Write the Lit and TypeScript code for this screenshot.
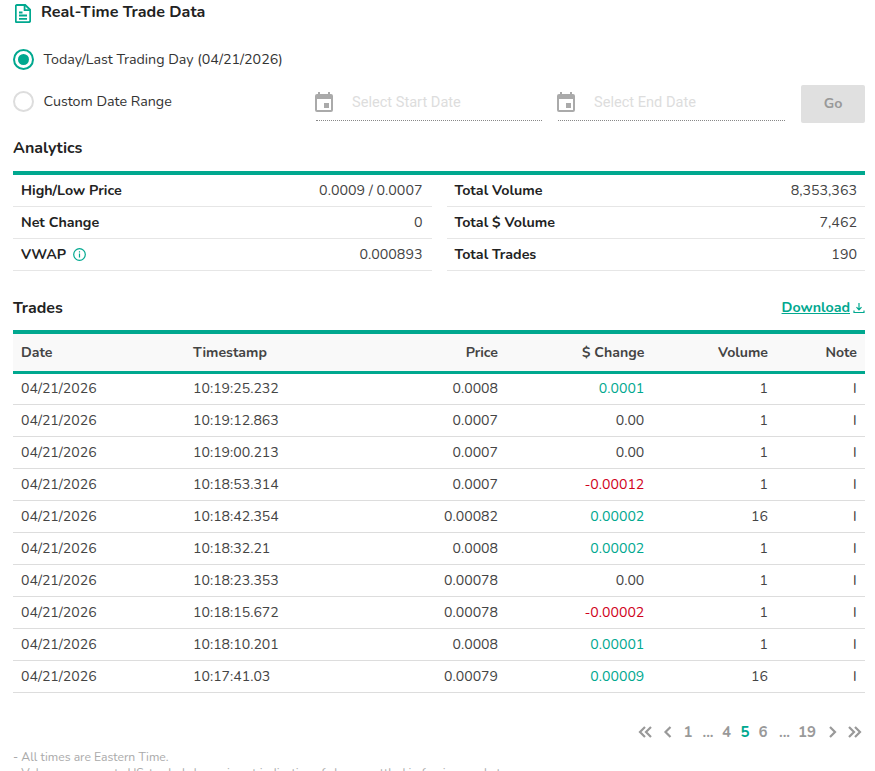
import { LitElement, html, css, svg } from "lit";
import { customElement } from "lit/decorators.js";

const rows = [
  ["10:19:25.232", "0.0008", "0.0001", "up", "1"],
  ["10:19:12.863", "0.0007", "0.00", "", "1"],
  ["10:19:00.213", "0.0007", "0.00", "", "1"],
  ["10:18:53.314", "0.0007", "-0.00012", "down", "1"],
  ["10:18:42.354", "0.00082", "0.00002", "up", "16"],
  ["10:18:32.21", "0.0008", "0.00002", "up", "1"],
  ["10:18:23.353", "0.00078", "0.00", "", "1"],
  ["10:18:15.672", "0.00078", "-0.00002", "down", "1"],
  ["10:18:10.201", "0.0008", "0.00001", "up", "1"],
  ["10:17:41.03", "0.00079", "0.00009", "up", "16"],
];

const calendar = svg`<svg class="cal" viewBox="0 0 18 20" width="18" height="20"><path fill="#aaa" d="M3 0h2v2h8V0h2v2h1a2 2 0 0 1 2 2v14a2 2 0 0 1-2 2H2a2 2 0 0 1-2-2V4a2 2 0 0 1 2-2h1z"/><rect x="2" y="7" width="14" height="11" fill="#fff"/><rect x="9" y="11" width="5" height="5" fill="#aaa"/></svg>`;

@customElement("app-root")
export class AppRoot extends LitElement {
  static styles = css`
    :host {
      display: block;
      height: 771px;
      overflow: hidden;
      box-sizing: border-box;
      padding: 0 10px 0 13px;
      font-family: "Nunito", "Lato", "Noto Sans", sans-serif;
      font-size: 14.25px;
      color: #333;
      background: #fff;
    }
    .title { display: flex; align-items: center; gap: 10px; height: 24px; padding-left: 2px; font-size: 16.1px; font-weight: 700; color: #222; }
    .title svg { margin-top: 2px; }
    .radio-row { display: flex; align-items: center; height: 42px; }
    .first { margin-top: 14px; }
    .radio { width: 17px; height: 17px; border: 2px solid #ddd; border-radius: 50%; margin-right: 9.5px; flex: none; display: flex; align-items: center; justify-content: center; }
    .radio.on { border-color: #00a88f; }
    .radio.on::after { content: ""; width: 11px; height: 11px; border-radius: 50%; background: #00a88f; }
    .label { width: 272.5px; flex: none; white-space: nowrap; }
    .date { width: 226px; height: 36px; padding-bottom: 2px; margin-right: 16px; box-sizing: border-box; border-bottom: 1px dotted #888; display: flex; align-items: center; gap: 19px; align-self: flex-start; margin-top: 5px; flex: none; color: #ddd; font-family: "Roboto", sans-serif; font-size: 14.6px; }
    .date.wide { width: 227px; }
    .cal { margin-left: -1px; }
    .go { width: 64px; height: 38px; padding-bottom: 2px; box-sizing: border-box; align-self: flex-start; margin-top: 5px; background: #e0e0e0; border-radius: 2px; color: #999; font-weight: 700; display: flex; align-items: center; justify-content: center; flex: none; }
    .h { font-size: 16px; font-weight: 700; color: #222; }
    .an-h { margin-top: 15px; height: 22px; line-height: 22px; }
    .analytics { display: grid; grid-template-columns: 419px 418px; column-gap: 15px; margin-top: 12px; border-top: 4px solid #00a88f; }
    .kv { display: flex; align-items: center; justify-content: space-between; height: 31px; border-bottom: 1px solid #e6e6e6; padding: 0 9.5px 0 8px; color: #444; }
    .right .kv { padding: 0 8px 0 7.5px; }
    .kv b { font-weight: 700; color: #222; display: flex; align-items: center; gap: 7px; }
    .tr-h { display: flex; align-items: center; justify-content: space-between; margin-top: 26px; height: 22px; }
    .dl { display: flex; align-items: center; gap: 3px; color: #00a88f; font-weight: 700; text-decoration: underline; font-size: 14.25px; margin-top: -1px; }
    table { width: 852px; table-layout: fixed; border-collapse: collapse; margin-top: 11px; border-top: 4px solid #00a88f; font-size: 14.1px; }
    th { height: 40px; padding: 0 8px; background: #f9f9f9; border-bottom: 3px solid #00a88f; font-weight: 700; color: #444; text-align: right; box-sizing: border-box; }
    td { height: 32px; padding: 0 8px; border-bottom: 1px solid #ddd; text-align: right; box-sizing: border-box; color: #444; }
    .l { text-align: left; }
    td.up { color: #00a88f; }
    td.down { color: #d0021b; }
    th.chg, td.chg { padding-right: 8.7px; }
    td.note { padding-right: 8.4px; color: #333; }
    .pager { display: flex; justify-content: flex-end; align-items: center; margin-top: 28px; height: 22px; color: #999; font-weight: 700; font-size: 15px; padding-right: 3px; }
    .pager span { text-align: center; }
    .pager .cur { color: #00a88f; }
    .foot { margin-top: 6px; font-size: 12.2px; line-height: 16px; color: #aaa; }
  `;

  chev(d: string) {
    return html`<svg width="16" height="14" viewBox="0 0 16 14" fill="none" stroke="#999" stroke-width="2.2"><path d=${d}/></svg>`;
  }

  render() {
    const w = (n: number) => `width:${n}px`;
    return html`
      <div class="title">
        <svg width="16" height="19" viewBox="0 0 16 19" fill="none" stroke="#00a88f" stroke-width="1.8"><path d="M1.8 1h8.4l5 4.8V16.6a1.6 1.6 0 0 1-1.6 1.6H1.8a1 1 0 0 1-1-1V2a1 1 0 0 1 1-1z"/><path d="M9.6 1v5.2h5.4M4 8.5h3.5M4 11.5h8M4 14.8h8"/></svg>
        Real-Time Trade Data
      </div>
      <div class="radio-row first"><span class="radio on"></span><span class="label">Today/Last Trading Day (04/21/2026)</span></div>
      <div class="radio-row">
        <span class="radio"></span><span class="label">Custom Date Range</span>
        <div class="date">${calendar}<span>Select Start Date</span></div>
        <div class="date wide">${calendar}<span>Select End Date</span></div>
        <div class="go">Go</div>
      </div>
      <div class="h an-h">Analytics</div>
      <div class="analytics">
        <div>
          <div class="kv"><b>High/Low Price</b><span>0.0009 / 0.0007</span></div>
          <div class="kv"><b>Net Change</b><span>0</span></div>
          <div class="kv"><b>VWAP <svg width="13" height="13" viewBox="0 0 13 13" fill="none" stroke="#00a88f" stroke-width="1.2"><circle cx="6.5" cy="6.5" r="5.8"/><path d="M6.5 5.5v4M6.5 3.2v1.2"/></svg></b><span>0.000893</span></div>
        </div>
        <div class="right">
          <div class="kv"><b>Total Volume</b><span>8,353,363</span></div>
          <div class="kv"><b>Total $ Volume</b><span>7,462</span></div>
          <div class="kv"><b>Total Trades</b><span>190</span></div>
        </div>
      </div>
      <div class="h tr-h"><span>Trades</span>
        <span class="dl">Download <svg width="12" height="12" viewBox="0 0 12 12" fill="none" stroke="#00a88f" stroke-width="1.2"><path d="M6 1v6.5M3.5 5.2 6 7.8l2.5-2.6M1 8.5v2h10v-2"/></svg></span>
      </div>
      <table>
        <colgroup><col style="width:172px"/><col style="width:159px"/><col style="width:162px"/><col style="width:147px"/><col style="width:123px"/><col style="width:89px"/></colgroup>
        <thead><tr><th class="l">Date</th><th class="l">Timestamp</th><th>Price</th><th class="chg">$ Change</th><th>Volume</th><th>Note</th></tr></thead>
        <tbody>
          ${rows.map((r) => html`<tr><td class="l">04/21/2026</td><td class="l">${r[0]}</td><td>${r[1]}</td><td class="chg ${r[3]}">${r[2]}</td><td>${r[4]}</td><td class="note">I</td></tr>`)}
        </tbody>
      </table>
      <div class="pager">
        ${this.chev("M8 2 3 7l5 5M14 2 9 7l5 5")}
        <span style=${w(7)}></span>
        ${this.chev("M10.5 2 5.5 7l5 5")}
        <span style=${w(1)}></span>
        <span style=${w(22)}>1</span><span style=${w(18)}>...</span><span style=${w(19)}>4</span><span class="cur" style=${w(18)}>5</span><span style=${w(18)}>6</span><span style=${w(25)}>...</span><span style=${w(20)}>19</span>
        <span style=${w(7)}></span>
        ${this.chev("M6 2l5 5-5 5")}
        <span style=${w(6)}></span>
        ${this.chev("M3 2l5 5-5 5M9 2l5 5-5 5")}
      </div>
      <div class="foot">
        <div>- All times are Eastern Time.</div>
        <div>- Volume represents US-traded shares is not indicative of shares settled in foreign market</div>
      </div>
    `;
  }
}
